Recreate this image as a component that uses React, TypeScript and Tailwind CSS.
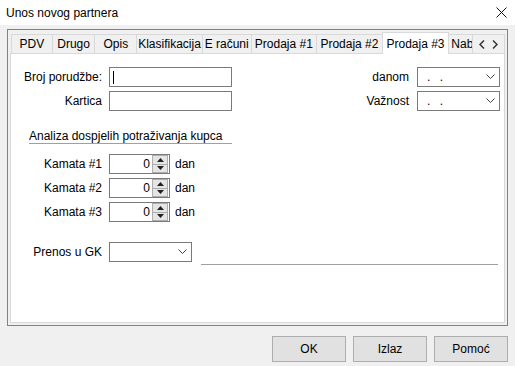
import React from "react";

const FONT = { fontFamily: '"Liberation Sans", Arial, sans-serif' };

const TABS = [
  { t: "PDV", w: 41 },
  { t: "Drugo", w: 43 },
  { t: "Opis", w: 42 },
  { t: "Klasifikacija", w: 66 },
  { t: "E računi", w: 49 },
  { t: "Prodaja #1", w: 66 },
  { t: "Prodaja #2", w: 66 },
];

function Chevron() {
  return (
    <svg width="9" height="6" viewBox="0 0 9 6" className="shrink-0">
      <path d="M0.5 0.5 L4.5 4.5 L8.5 0.5" fill="none" stroke="#404040" strokeWidth="1" />
    </svg>
  );
}

function Combo({ w, dots }: { w: string; dots?: boolean }) {
  return (
    <div className={`${w} h-[20px] border border-[#7a7a7a] bg-white flex items-center pl-[9px] pr-[4px]`}>
      <span className="flex-1 text-[12px] leading-none tracking-[3px]">{dots ? ". ." : ""}</span>
      <Chevron />
    </div>
  );
}

function Spin() {
  return (
    <div className="flex items-center gap-[5px]">
      <div className="w-[61px] h-[20px] border border-[#7a7a7a] bg-white flex items-center">
        <span className="flex-1 text-right text-[12px] pr-[2px]">0</span>
        <div className="flex flex-col w-[16px] h-[18px] mr-[1px]">
          <div className="flex-1 border border-[#adadad] bg-[#e5e5e5] flex items-center justify-center">
            <svg width="7" height="4" viewBox="0 0 7 4"><path d="M0 4 L3.5 0 L7 4 Z" fill="#202020" /></svg>
          </div>
          <div className="flex-1 border border-[#adadad] border-t-0 bg-[#e5e5e5] flex items-center justify-center">
            <svg width="7" height="4" viewBox="0 0 7 4"><path d="M0 0 L3.5 4 L7 0 Z" fill="#202020" /></svg>
          </div>
        </div>
      </div>
      <span className="text-[12px]">dan</span>
    </div>
  );
}

function Label({ children }: { children: React.ReactNode }) {
  return <span className="w-[92px] pr-[1px] text-right text-[12px] shrink-0 whitespace-nowrap">{children}</span>;
}

export default function App() {
  return (
    <div style={FONT} className="w-[515px] h-[366px] bg-[#f0f0f0] text-black flex flex-col overflow-hidden">
      <div className="h-[25px] bg-white flex items-center justify-between pl-[6px] pr-[8px]">
        <span className="text-[12px]">Unos novog partnera</span>
        <svg width="11" height="11" viewBox="0 0 11 11">
          <path d="M0.5 0.5 L10.5 10.5 M10.5 0.5 L0.5 10.5" stroke="#111" strokeWidth="1" />
        </svg>
      </div>

      <div className="mx-[7px] mt-[4px] h-[297px] border border-[#828282] px-[2px] pt-[1px] pb-[2px] flex flex-col">
        <div className="flex items-end h-[22px] pl-[1px]">
          {TABS.map((tab) => (
            <div
              key={tab.t}
              style={{ width: tab.w }}
              className="h-[19px] border border-[#d9d9d9] border-r-0 border-b-0 bg-[#f0f0f0] text-[12px] flex items-center justify-center whitespace-nowrap overflow-hidden"
            >
              {tab.t}
            </div>
          ))}
          <div className="w-[68px] h-[22px] border border-[#d9d9d9] border-b-0 bg-white text-[12px] flex items-center justify-center -mb-[1px] z-10 whitespace-nowrap">
            Prodaja #3
          </div>
          <div className="w-[23px] h-[19px] border-t border-[#d9d9d9] bg-[#f0f0f0] text-[12px] leading-[18px] pl-[2px] overflow-hidden whitespace-nowrap">
            Nab
          </div>
          <div className="w-[33px] h-[19px] border border-[#d9d9d9] border-b-0 bg-[#f0f0f0] flex items-center justify-around px-[3px]">
            <svg width="6" height="9" viewBox="0 0 6 9"><path d="M5 0.5 L1 4.5 L5 8.5" fill="none" stroke="#333" strokeWidth="1.5" /></svg>
            <svg width="6" height="9" viewBox="0 0 6 9"><path d="M1 0.5 L5 4.5 L1 8.5" fill="none" stroke="#333" strokeWidth="1.5" /></svg>
          </div>
        </div>

        <div className="flex-1 bg-white border border-[#d9d9d9] flex flex-col pt-[13px]">
          <div className="flex">
            <div className="flex flex-col gap-[4px]">
              <div className="flex items-center gap-[6px]">
                <Label>Broj porudžbe:</Label>
                <div className="w-[123px] h-[20px] border border-[#7a7a7a] flex items-center pl-[3px]">
                  <div className="w-px h-[13px] bg-black" />
                </div>
              </div>
              <div className="flex items-center gap-[6px]">
                <Label>Kartica</Label>
                <div className="w-[123px] h-[20px] border border-[#7a7a7a]" />
              </div>
            </div>
            <div className="flex-1 flex flex-col gap-[4px] items-end pr-[4px]">
              <div className="flex items-center gap-[8px]">
                <span className="text-[12px]">danom</span>
                <Combo w="w-[83px]" dots />
              </div>
              <div className="flex items-center gap-[8px]">
                <span className="text-[12px]">Važnost</span>
                <Combo w="w-[83px]" dots />
              </div>
            </div>
          </div>

          <div className="ml-[18px] mt-[19px] w-[203px] border-b border-[#a0a0a0] text-[12px] leading-[13px] whitespace-nowrap">
            Analiza dospjelih potraživanja kupca
          </div>

          <div className="flex flex-col gap-[4px] mt-[10px]">
            {["Kamata #1", "Kamata #2", "Kamata #3"].map((k) => (
              <div key={k} className="flex items-center gap-[6px]">
                <Label>{k}</Label>
                <Spin />
              </div>
            ))}
          </div>

          <div className="flex items-center gap-[6px] mt-[20px]">
            <Label>Prenos u GK</Label>
            <div className="w-[83px] h-[20px] border border-[#7a7a7a] flex items-center justify-end pr-[4px]">
              <Chevron />
            </div>
            <div className="ml-[3px] w-[297px] h-px bg-[#a0a0a0] self-end translate-y-[3px]" />
          </div>
        </div>
      </div>

      <div className="flex justify-end gap-[7px] pr-[7px] mt-[10px]">
        {["OK", "Izlaz", "Pomoć"].map((b) => (
          <div key={b} className="w-[74px] h-[26px] border border-[#adadad] bg-[#e1e1e1] text-[12px] flex items-center justify-center">
            {b}
          </div>
        ))}
      </div>
    </div>
  );
}
